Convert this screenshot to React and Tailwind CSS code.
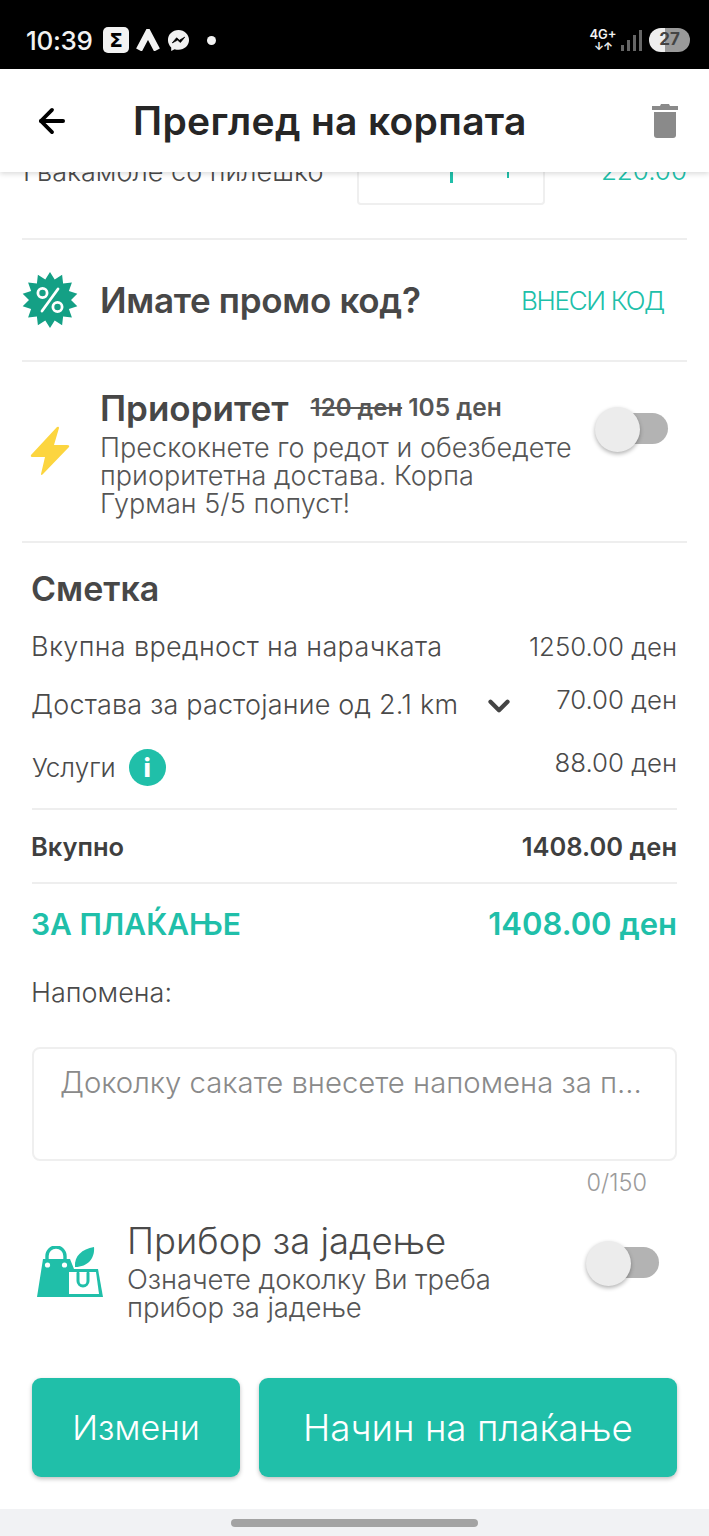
import React from 'react';
import { ArrowLeft, ChevronDown } from 'lucide-react';

const starPoints = () => {
  const pts = [];
  for (let i = 0; i < 28; i++) {
    const r = i % 2 === 0 ? 28 : 21;
    const a = (Math.PI * i) / 14 - Math.PI / 2;
    pts.push(`${(28 + r * Math.cos(a)).toFixed(1)},${(28 + r * Math.sin(a)).toFixed(1)}`);
  }
  return pts.join(' ');
};

const PromoBadge = () => (
  <svg width="56" height="56" viewBox="0 0 56 56" className="shrink-0">
    <polygon points={starPoints()} fill="#14a085" />
    <circle cx="20.5" cy="21" r="4.6" fill="none" stroke="#fff" strokeWidth="2.8" />
    <circle cx="35.5" cy="35" r="4.6" fill="none" stroke="#fff" strokeWidth="2.8" />
    <path d="M36 17 L20 39" stroke="#fff" strokeWidth="2.8" strokeLinecap="round" />
  </svg>
);

const Bolt = () => (
  <svg width="40" height="50" viewBox="0 0 40 50">
    <path d="M27 1 L1 29 Q0 31 3 31 L15 31 L11 48 Q11 50 13 48 L39 21 Q40 19 37 19 L24 19 L29 2 Q29 0 27 1 Z" fill="#fcd53f" />
  </svg>
);

const BagIcon = () => (
  <svg width="66" height="52" viewBox="0 0 66 52">
    <path d="M10 15 V10 A9 9 0 0 1 28 10 V15" fill="none" stroke="#20bfa9" strokeWidth="3.4" />
    <path d="M6 13 H33 L37 23 H29 V51 H0 Z" fill="#20bfa9" />
    <circle cx="10.5" cy="19" r="2.6" fill="#fff" />
    <circle cx="27.5" cy="19" r="2.6" fill="#fff" />
    <path d="M29 23 H61 L66 51 H25 Z" fill="#20bfa9" />
    <path d="M32 26 H59 L62 48 H32 Z" fill="#fff" />
    <path d="M41 27 V35 A5 5 0 0 0 51 35 V27" fill="none" stroke="#20bfa9" strokeWidth="3" strokeLinecap="round" />
    <path d="M38 21 C37 10 45 3 57 1 C58 12 51 21 38 21 Z" fill="#20bfa9" />
  </svg>
);

const Messenger = () => (
  <svg width="23" height="23" viewBox="0 0 24 24">
    <path d="M12 1C5.8 1 1 5.5 1 11.5c0 3.1 1.3 5.8 3.4 7.7V23l3.5-1.9c1.3.4 2.7.6 4.1.6 6.2 0 11-4.6 11-10.2S18.200 1 12 1z" fill="#f2f2f2" />
    <path d="M5.500 14.500 L10 9.200 L13 11.700 L18.500 8.500 L14 14 L11 11.600 Z" fill="#000" stroke="#000" strokeWidth="0.8" strokeLinejoin="round" />
  </svg>
);

const TrashIcon = () => (
  <svg width="26" height="34" viewBox="0 0 26 34">
    <path d="M9 0 H17 L18 2 H26 V6 H0 V2 H8 Z" fill="#8a8a8a" />
    <path d="M2 8 H24 V31 Q24 34 21 34 H5 Q2 34 2 31 Z" fill="#8a8a8a" />
  </svg>
);

const Toggle = () => (
  <div className="relative w-[73px] h-[45px]">
    <div className="absolute right-0 top-[6px] w-[52px] h-[31px] rounded-full bg-[#b3b3b3]" />
    <div className="absolute left-0 top-0 w-[45px] h-[45px] rounded-full bg-[#ececec] shadow-[0_2px_4px_rgba(0,0,0,0.3)]" />
  </div>
);

const Divider = ({ className = '' }) => <div className={`h-[2px] bg-[#eeeeee] ${className}`} />;

export default function App() {
  return (
    <div className="w-[709px] h-[1536px] overflow-hidden flex flex-col bg-white font-['Inter',sans-serif]">
      {/* status bar */}
      <div className="h-[69px] shrink-0 bg-black flex items-center pt-[11px] pl-[26px] pr-[19px] text-[#f2f2f2]">
        <span className="text-[26px] font-medium tracking-[-0.3px] w-[77px]">10:39</span>
        <span className="w-[26px] h-[26px] rounded-[5px] bg-[#f2f2f2] text-black text-[20px] font-bold flex items-center justify-center font-['DejaVu_Sans',sans-serif]">Σ</span>
        <svg width="24" height="22" viewBox="0 0 24 22" className="ml-[7px]">
          <path d="M3 21 L12 4 L21 21" fill="none" stroke="#f2f2f2" strokeWidth="6.500" />
        </svg>
        <span className="ml-[7px]"><Messenger /></span>
        <span className="w-[9px] h-[9px] rounded-full bg-[#f2f2f2] ml-[17px]" />
        <div className="ml-auto flex items-center">
          <div className="flex flex-col items-center w-[28px]">
            <span className="text-[13px] leading-[13px] font-semibold">4G+</span>
            <span className="text-[11px] leading-[11px] font-bold tracking-[-1px]">↓↑</span>
          </div>
          <div className="flex items-end gap-[3px] h-[21px] ml-[4px] mr-[7px]">
            <span className="w-[3px] h-[6px] bg-[#666]" />
            <span className="w-[3px] h-[11px] bg-[#666]" />
            <span className="w-[3px] h-[16px] bg-[#666]" />
            <span className="w-[3px] h-[21px] bg-[#666]" />
          </div>
          <div className="w-[41px] h-[24px] rounded-full overflow-hidden flex items-center justify-center bg-gradient-to-r from-[#eeeeee] from-[40%] to-[#9a9a9a] to-[40%] text-[#444] text-[17px] font-bold">27</div>
        </div>
      </div>

      {/* header */}
      <div className="relative z-10 h-[103px] shrink-0 bg-white shadow-[0_2px_5px_rgba(0,0,0,0.14)] flex items-center">
        <ArrowLeft size={38} strokeWidth={2.4} className="ml-[33px] text-black shrink-0" />
        <h1 className="ml-[62px] text-[39px] font-semibold tracking-[0.3px] text-[#262626] leading-none">Преглед на корпата</h1>
        <span className="ml-auto mr-[31px]"><TrashIcon /></span>
      </div>

      {/* content */}
      <div className="flex-1 flex flex-col overflow-hidden">
        {/* cart item, cut off by the header */}
        <div className="relative h-[66px] shrink-0 mx-[22px]">
          <div className="flex items-start -mt-[27px] h-[60px]">
            <span className="text-[27px] font-light text-[#4a4a4a] leading-[54px] ml-[1px]">Гвакамоле со пилешко</span>
          </div>
          <div className="absolute left-[335px] -top-[40px] w-[188px] h-[73px] border-2 border-[#efefef] rounded-[4px] bg-white">
            <span className="absolute left-[91px] top-[30px] w-[3px] h-[19px] bg-[#20bfa9]" />
            <span className="absolute left-[148px] top-[34px] w-[2px] h-[10px] bg-[#20bfa9]" />
          </div>
          <span className="absolute right-0 -top-[14px] text-[26px] font-light text-[#20bfa9] leading-none">220.00</span>
        </div>
        <Divider className="mx-[22px] shrink-0" />

        {/* promo */}
        <div className="h-[120px] shrink-0 mx-[22px] flex items-center">
          <PromoBadge />
          <span className="ml-[22px] text-[35px] font-semibold text-[#474747] tracking-[-0.3px]">Имате промо код?</span>
          <span className="ml-auto mr-[23px] text-[26px] font-light text-[#20bfa9] tracking-[-1.3px]">ВНЕСИ КОД</span>
        </div>
        <Divider className="mx-[22px] shrink-0" />

        {/* priority */}
        <div className="relative h-[179px] shrink-0 mx-[22px] flex items-center">
          <div className="w-[78px] pl-[8px] pb-[2px] shrink-0"><Bolt /></div>
          <div className="flex flex-col">
            <div className="flex items-center pt-[2px]">
              <span className="text-[35px] font-semibold text-[#474747] leading-[40px]">Приоритет</span>
              <span className="ml-[22px] text-[24px] font-semibold text-[#555] line-through">120 ден</span>
              <span className="ml-[6px] text-[24.5px] font-semibold text-[#555]">105 ден</span>
            </div>
            <p className="text-[27px] font-light leading-[28px] text-[#555] mt-[6px] w-[490px] tracking-[0.05px]">
              Прескокнете го редот и обезбедете<br />приоритетна достава. Корпа<br />Гурман 5/5 попуст!
            </p>
          </div>
          <div className="absolute left-[573px] top-[45px]"><Toggle /></div>
        </div>
        <Divider className="mx-[22px] shrink-0" />

        {/* bill */}
        <div className="mx-[32px] flex flex-col shrink-0">
          <h2 className="mt-[24px] -ml-[1px] text-[34px] font-semibold text-[#474747] leading-[44px]">Сметка</h2>
          <div className="flex justify-between text-[#4a4a4a] mt-[20px] leading-[32px]">
            <span className="text-[27px] font-light -ml-[1px] tracking-[0.35px]">Вкупна вредност на нарачката</span>
            <span className="text-[25.8px] font-light">1250.00 ден</span>
          </div>
          <div className="flex text-[#4a4a4a] mt-[21px] leading-[32px]">
            <span className="mt-[5px] text-[27px] font-light -ml-[1px] tracking-[0.2px]">Достава за растојание од 2.1 km</span>
            <ChevronDown size={34} strokeWidth={3} className="ml-auto mr-[40px] mt-[5px] text-[#444]" />
            <span className="text-[25.8px] font-light">70.00 ден</span>
          </div>
          <div className="flex items-start text-[#4a4a4a] mt-[20px] h-[46px]">
            <span className="mt-[9px] text-[26px] font-light leading-[32px]">Услуги</span>
            <span className="ml-[13px] mt-[6px] w-[37px] h-[37px] rounded-full bg-[#20bfa9] text-white flex items-center justify-center text-[26px] font-extrabold leading-none">i</span>
            <span className="ml-auto text-[25.8px] font-light leading-[32px] mt-[4px]">88.00 ден</span>
          </div>
          <Divider className="mt-[19px]" />
          <div className="flex justify-between items-center h-[72px] pt-[2px] text-[25.5px] font-semibold text-[#3f3f3f]">
            <span className="-ml-[1px]">Вкупно</span>
            <span>1408.00 ден</span>
          </div>
          <Divider />
          <div className="flex justify-between items-center h-[80px] font-semibold text-[#20bfa9]">
            <span className="text-[30px] -ml-[1px]">ЗА ПЛАЌАЊЕ</span>
            <span className="text-[31px]">1408.00 ден</span>
          </div>
          <span className="mt-[13px] -ml-[1px] text-[27px] font-light text-[#4a4a4a] leading-[32px]">Напомена:</span>
          <div className="mt-[38px] h-[114px] border-2 border-[#efefef] rounded-[8px] pl-[26px] pt-[16px] text-[29.300px] font-light text-[#8a8a8a] leading-[36px] whitespace-nowrap overflow-hidden">
            Доколку сакате внесете напомена за п...
          </div>
          <span className="self-end mr-[30px] mt-[9px] text-[23.5px] font-light text-[#9b9b9b] leading-[26px]">0/150</span>
        </div>

        {/* cutlery */}
        <div className="relative h-[103px] mt-[25px] shrink-0 ml-[37px] flex items-start">
          <div className="mt-[25px] shrink-0"><BagIcon /></div>
          <div className="ml-[24px] flex flex-col">
            <span className="text-[36.5px] font-light text-[#4a4a4a] leading-[40px]">Прибор за јадење</span>
            <span className="text-[27.5px] font-light text-[#555] leading-[28px] w-[420px] mt-[4px] tracking-[-0.1px]">Означете доколку Ви треба<br />прибор за јадење</span>
          </div>
          <div className="absolute left-[549px] top-[20px]"><Toggle /></div>
        </div>

        {/* actions */}
        <div className="mt-auto mb-[32px] mx-[32px] flex gap-[19px] shrink-0">
          <button className="w-[208px] h-[99px] rounded-[9px] bg-[#20bfa9] text-white text-[34px] font-light shadow-[0_2px_4px_rgba(0,0,0,0.25)]">Измени</button>
          <button className="flex-1 h-[99px] rounded-[9px] bg-[#20bfa9] text-white text-[36.8px] font-light shadow-[0_2px_4px_rgba(0,0,0,0.25)]">Начин на плаќање</button>
        </div>
      </div>

      {/* gesture bar */}
      <div className="h-[27px] shrink-0 bg-[#f1f2f4] flex items-center justify-center">
        <div className="w-[247px] h-[8px] rounded-full bg-[#a3a3a3]" />
      </div>
    </div>
  );
}
